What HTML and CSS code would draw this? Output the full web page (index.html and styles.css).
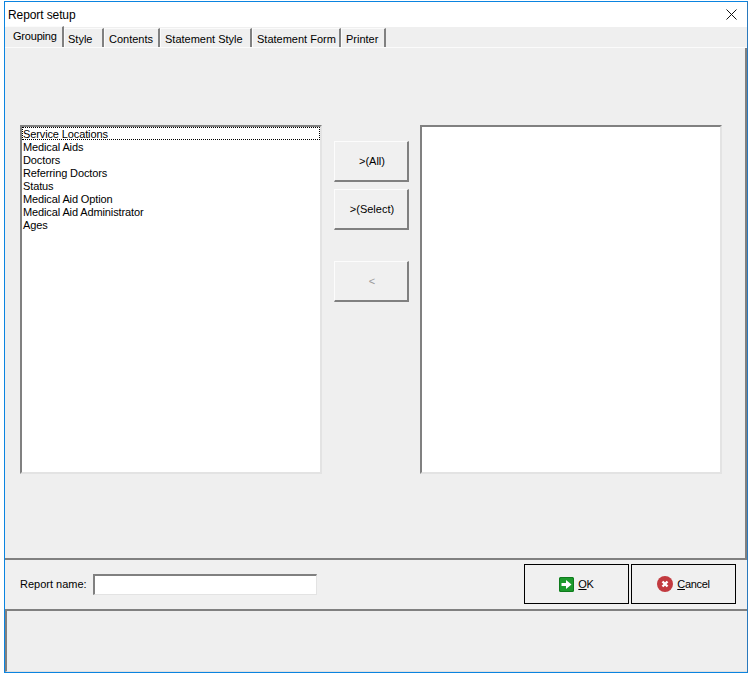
FILE: index.html
```html
<!DOCTYPE html>
<html lang="en">
<head>
<meta charset="utf-8">
<title>Report setup</title>
<link rel="stylesheet" href="styles.css">
</head>
<body>
<div class="window">
  <header class="titlebar">
    <span class="title">Report setup</span>
    <svg class="close" width="11" height="11" viewBox="0 0 11 11"><path d="M0.5 0.5L10.5 10.5M10.5 0.5L0.5 10.5" stroke="#111" stroke-width="1" fill="none"/></svg>
  </header>
  <nav class="tabs">
    <div class="tab tab-active tab-grouping">Grouping</div>
    <div class="tab tab-style">Style</div>
    <div class="tab tab-contents">Contents</div>
    <div class="tab tab-sstyle">Statement Style</div>
    <div class="tab tab-sform">Statement Form</div>
    <div class="tab tab-printer">Printer</div>
  </nav>
  <main class="page">
    <div class="listbox">
      <div class="item item-focus">Service Locations</div>
      <div class="item">Medical Aids</div>
      <div class="item">Doctors</div>
      <div class="item">Referring Doctors</div>
      <div class="item">Status</div>
      <div class="item">Medical Aid Option</div>
      <div class="item">Medical Aid Administrator</div>
      <div class="item">Ages</div>
    </div>
    <div class="movers">
      <button class="mover">&gt;(All)</button>
      <button class="mover">&gt;(Select)</button>
      <button class="mover mover-off">&lt;</button>
    </div>
    <div class="listbox listbox-right"></div>
  </main>
  <section class="footer">
    <label class="name-label">Report name:</label>
    <div class="name-input"></div>
    <div class="actions">
      <button class="action">
        <svg width="15" height="15" viewBox="0 0 15 15"><rect x="0" y="0" width="15" height="15" rx="1.5" fill="#1c9a2c"/><rect x="0.5" y="0.5" width="14" height="14" rx="1.5" fill="none" stroke="#0f7a1d"/><path d="M2.5 6H7V3L12.5 7.5L7 12V9H2.5Z" fill="#fff"/></svg>
        <span><u>O</u>K</span>
      </button>
      <button class="action">
        <svg width="16" height="16" viewBox="0 0 16 16"><circle cx="8" cy="8" r="8" fill="#c23a3f"/><path d="M5.5 5.5L10.5 10.5M10.5 5.5L5.5 10.5" stroke="#fff" stroke-width="2.4" fill="none"/></svg>
        <span><u>C</u>ancel</span>
      </button>
    </div>
  </section>
  <section class="status"></section>
</div>
</body>
</html>
```
FILE: styles.css
```css
* { box-sizing: border-box; }
html, body { margin: 0; padding: 0; background: #fff; }
body {
  width: 752px;
  height: 676px;
  padding: 1px 4px 3px;
  font-family: "Liberation Sans", Arial, sans-serif;
  font-size: 11px;
  color: #000;
}
.window {
  width: 744px;
  height: 672px;
  border: 1px solid #0b84e0;
  border-right-color: #2a79bd;
  background: #f0f0f0;
  display: flex;
  flex-direction: column;
}
.titlebar {
  height: 25px;
  flex: none;
  background: #fff;
  display: flex;
  align-items: center;
  justify-content: space-between;
  padding: 0 10px 0 3px;
  font-size: 12px;
}
.title { letter-spacing: -0.1px; }
.tabs {
  height: 21px;
  flex: none;
  display: flex;
  align-items: flex-end;
  padding-left: 1px;
  background: #efefef;
  border-bottom: 1px solid #fbfbfb;
}
.tab {
  height: 19px;
  padding: 3px 0 0 4px;
  line-height: 14px;
  border-top: 1px solid #fbfbfb;
  border-left: 1px solid #fbfbfb;
  border-right: 2px solid #808080;
  white-space: nowrap;
}
.tab-active { height: 21px; padding: 2px 0 0 7px; border-left: 0; letter-spacing: -0.2px; }
.tab-grouping { width: 58px; }
.tab-style { width: 40px; padding-left: 3px; }
.tab-contents { width: 56px; }
.tab-sstyle { width: 92px; }
.tab-sform { width: 89px; }
.tab-printer { width: 45px; }
.page {
  height: 512px;
  flex: none;
  display: flex;
  align-items: flex-start;
  padding: 77px 0 0 15px;
  border-right: 2px solid #808080;
  border-bottom: 2px solid #808080;
  background: #efefef;
}
.listbox {
  width: 302px;
  height: 349px;
  background: #fff;
  border-top: 2px solid #808080;
  border-left: 2px solid #808080;
  border-right: 2px solid #e3e3e3;
  border-bottom: 2px solid #e3e3e3;
  flex: none;
}
.item { height: 13px; line-height: 13px; padding: 1px 0 0 1px; white-space: nowrap; letter-spacing: -0.12px; }
.item-focus { outline: 1px dotted #000; outline-offset: -1px; }
.movers {
  width: 98px;
  flex: none;
  display: flex;
  flex-direction: column;
  gap: 7px;
  padding: 16px 0 0 12px;
}
.mover {
  width: 75px;
  height: 41px;
  flex: none;
  padding: 0 0 0 2px;
  font: inherit;
  color: #000;
  background: #f0f0f0;
  border-top: 1px solid #fcfcfc;
  border-left: 1px solid #fcfcfc;
  border-right: 2px solid #808080;
  border-bottom: 2px solid #808080;
}
.mover-off { margin-top: 24px; color: #9a9a9a; }
.footer {
  height: 49px;
  flex: none;
  display: flex;
  align-items: center;
  padding: 0 0 1px 15px;
}
.name-label { width: 73px; flex: none; }
.name-input {
  width: 224px;
  height: 21px;
  flex: none;
  background: #fff;
  border-top: 2px solid #808080;
  border-left: 2px solid #808080;
  border-right: 1px solid #e3e3e3;
  border-bottom: 1px solid #e3e3e3;
}
.actions { display: flex; gap: 2px; margin-left: 207px; }
.action {
  width: 105px;
  height: 40px;
  padding: 0;
  font: inherit;
  letter-spacing: -0.3px;
  color: #000;
  background: #f0f0f0;
  border: 1px solid #000;
  display: flex;
  align-items: center;
  justify-content: center;
  gap: 4px;
}
.status {
  flex: 1;
  background: #efefef;
  border-top: 2px solid #808080;
  border-left: 2px solid #808080;
  border-bottom: 1px solid #e0e0e0;
}
```
